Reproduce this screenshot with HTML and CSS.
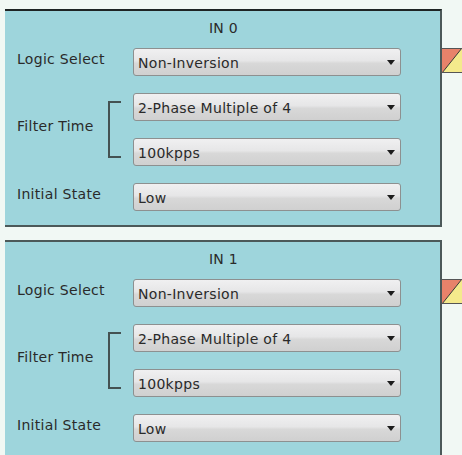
FILE: index.html
```html
<!DOCTYPE html>
<html>
<head>
<meta charset="utf-8">
<title>Input Settings</title>
<link rel="stylesheet" href="styles.css">
</head>
<body>

<div class="block first">
  <div class="panel">
    <div class="title">IN 0</div>
    <div class="grid">
      <div class="label">Logic Select</div>
      <div class="select"><span class="val">Non-Inversion</span><span class="arrow"></span></div>

      <div class="label span2">Filter Time</div>
      <div class="bracket"></div>
      <div class="select"><span class="val">2-Phase Multiple of 4</span><span class="arrow"></span></div>
      <div class="select"><span class="val">100kpps</span><span class="arrow"></span></div>

      <div class="label">Initial State</div>
      <div class="select"><span class="val">Low</span><span class="arrow"></span></div>
    </div>
  </div>
  <div class="side">
    <svg class="marker" width="20" height="25" viewBox="0 0 20 25">
      <polygon points="0,0 20,0 0,25" fill="#e8826a"/>
      <polygon points="20,0 20,25 0,25" fill="#f4ea8c"/>
      <line x1="0" y1="25" x2="20" y2="0" stroke="#333" stroke-width="1"/>
      <line x1="0" y1="0.5" x2="20" y2="0.5" stroke="#555" stroke-width="1"/>
      <line x1="0" y1="24.5" x2="20" y2="24.5" stroke="#555" stroke-width="1"/>
    </svg>
  </div>
</div>

<div class="block">
  <div class="panel">
    <div class="title">IN 1</div>
    <div class="grid">
      <div class="label">Logic Select</div>
      <div class="select"><span class="val">Non-Inversion</span><span class="arrow"></span></div>

      <div class="label span2">Filter Time</div>
      <div class="bracket"></div>
      <div class="select"><span class="val">2-Phase Multiple of 4</span><span class="arrow"></span></div>
      <div class="select"><span class="val">100kpps</span><span class="arrow"></span></div>

      <div class="label">Initial State</div>
      <div class="select"><span class="val">Low</span><span class="arrow"></span></div>
    </div>
  </div>
  <div class="side">
    <svg class="marker" width="20" height="25" viewBox="0 0 20 25">
      <polygon points="0,0 20,0 0,25" fill="#e8826a"/>
      <polygon points="20,0 20,25 0,25" fill="#f4ea8c"/>
      <line x1="0" y1="25" x2="20" y2="0" stroke="#333" stroke-width="1"/>
      <line x1="0" y1="0.5" x2="20" y2="0.5" stroke="#555" stroke-width="1"/>
      <line x1="0" y1="24.5" x2="20" y2="24.5" stroke="#555" stroke-width="1"/>
    </svg>
  </div>
</div>

</body>
</html>
```

FILE: styles.css
```css
html, body {
  margin: 0;
  padding: 0;
  background-color: #f1f8f4;
  overflow: hidden;
}

body {
  font-family: "DejaVu Sans", Verdana, sans-serif;
  font-size: 14px;
  letter-spacing: 0.3px;
  color: #2a2a2a;
  padding-top: 9px;
  width: 462px;
  height: 455px;
}

.block {
  display: flex;
  margin-bottom: 13px;
}

.panel {
  width: 435px;
  margin-left: 5px;
  background-color: #9ed5dc;
  border-top: 2px solid #4c5959;
  border-right: 2px solid #4c5959;
  border-bottom: 2px solid #4c5959;
  padding: 0 0 14px 0;
}

.first .panel {
  border-top-color: #1e2424;
}

.title {
  text-align: center;
  height: 20px;
  line-height: 20px;
  margin-top: 7px;
  margin-bottom: 10px;
  padding-left: 2px;
}

.grid {
  display: grid;
  grid-template-columns: 91px 25px 268px;
  grid-auto-rows: 28px;
  row-gap: 17px;
  padding-left: 12px;
}

.label {
  grid-column: 1 / 3;
  align-self: center;
  margin-top: -6px;
  white-space: nowrap;
}

.label.span2 {
  grid-column: 1;
  grid-row: 2 / 4;
  margin-top: -8px;
}

.bracket {
  grid-column: 2;
  grid-row: 2 / 4;
  align-self: center;
  width: 11px;
  height: 53px;
  border-left: 2px solid #445252;
  border-top: 2px solid #445252;
  border-bottom: 2px solid #445252;
  margin-top: 0;
}

.select {
  grid-column: 3;
  display: flex;
  align-items: center;
  box-sizing: border-box;
  border: 1px solid #8d9090;
  border-radius: 3px;
  background: linear-gradient(to bottom, #f0f0f1 0%, #e6e6e7 45%, #d8d8d8 55%, #d0d0d0 100%);
  padding-left: 4px;
  white-space: nowrap;
}

.val {
  flex: 1;
  line-height: 26px;
  padding-top: 1px;
}

.arrow {
  width: 0;
  height: 0;
  border-left: 4.5px solid transparent;
  border-right: 4.5px solid transparent;
  border-top: 5px solid #1c1c1c;
  margin-right: 5px;
}

.side {
  flex: 1;
}

.marker {
  display: block;
  margin-top: 39px;
}
```
